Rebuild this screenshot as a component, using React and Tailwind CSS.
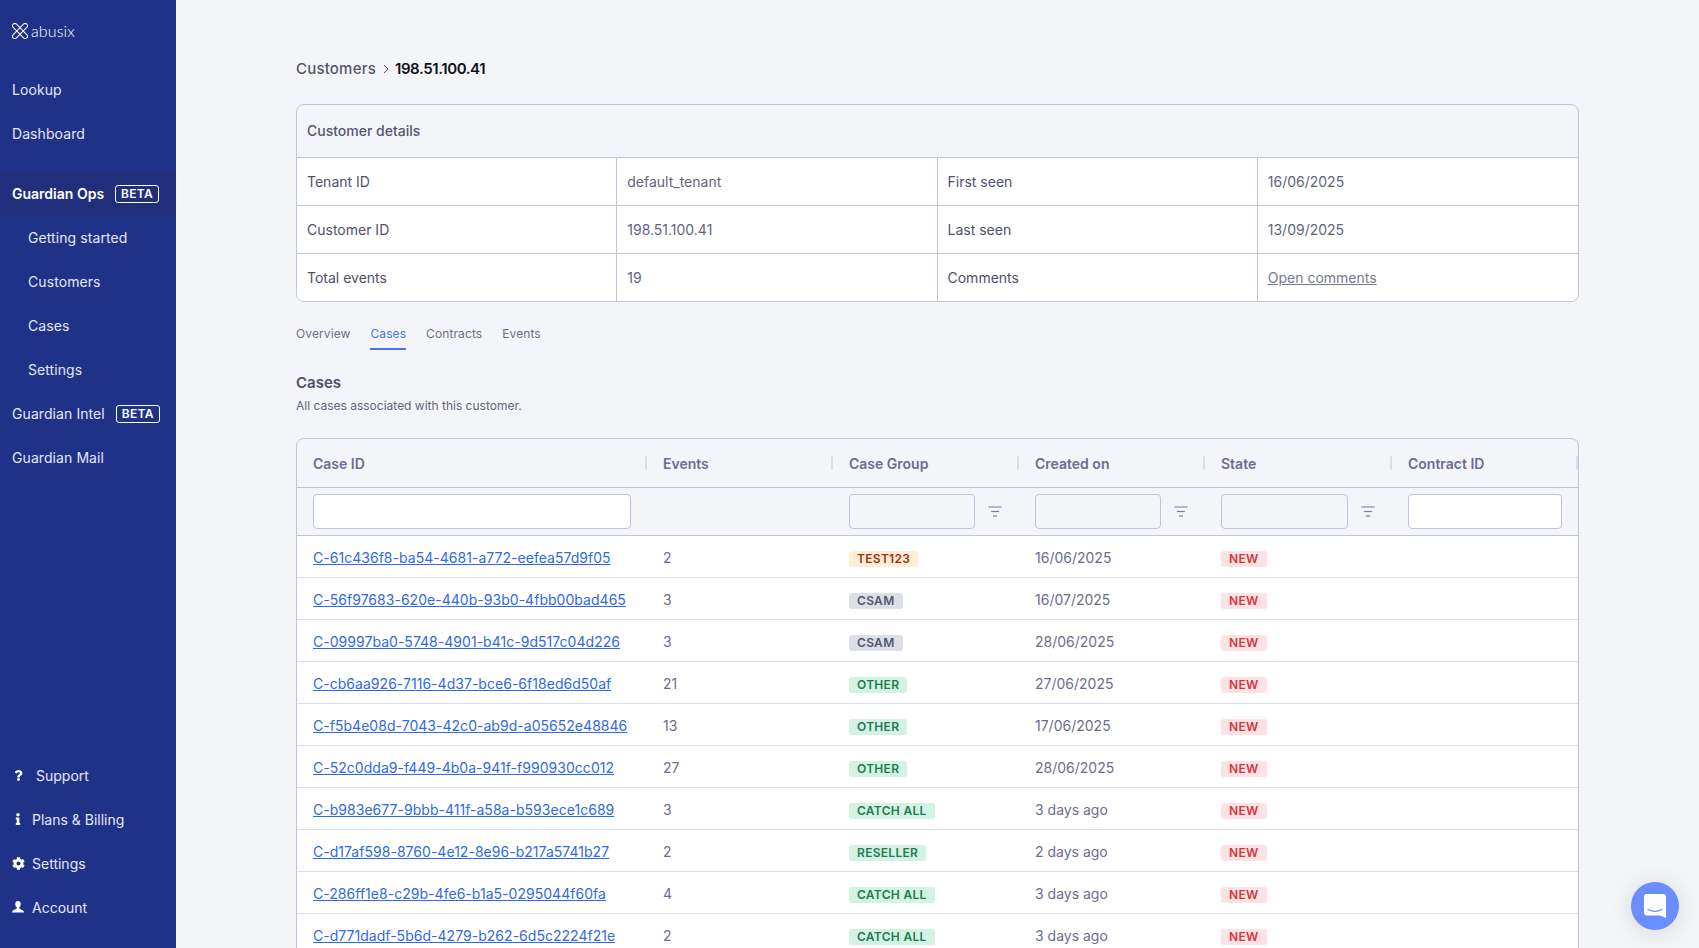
import { FaQuestion, FaInfo, FaCog } from 'react-icons/fa';

const cases = [
  ['C-61c436f8-ba54-4681-a772-eefea57d9f05', '2', 'TEST123', 'orange', '16/06/2025'],
  ['C-56f97683-620e-440b-93b0-4fbb00bad465', '3', 'CSAM', 'gray', '16/07/2025'],
  ['C-09997ba0-5748-4901-b41c-9d517c04d226', '3', 'CSAM', 'gray', '28/06/2025'],
  ['C-cb6aa926-7116-4d37-bce6-6f18ed6d50af', '21', 'OTHER', 'green', '27/06/2025'],
  ['C-f5b4e08d-7043-42c0-ab9d-a05652e48846', '13', 'OTHER', 'green', '17/06/2025'],
  ['C-52c0dda9-f449-4b0a-941f-f990930cc012', '27', 'OTHER', 'green', '28/06/2025'],
  ['C-b983e677-9bbb-411f-a58a-b593ece1c689', '3', 'CATCH ALL', 'green', '3 days ago'],
  ['C-d17af598-8760-4e12-8e96-b217a5741b27', '2', 'RESELLER', 'green', '2 days ago'],
  ['C-286ff1e8-c29b-4fe6-b1a5-0295044f60fa', '4', 'CATCH ALL', 'green', '3 days ago'],
  ['C-d771dadf-5b6d-4279-b262-6d5c2224f21e', '2', 'CATCH ALL', 'green', '3 days ago'],
];

const badgeColors = {
  orange: 'bg-[#ffedd5] text-[#9a3412]',
  gray: 'bg-[#dcdfe8] text-[#55576e]',
  green: 'bg-[#d3f3e2] text-[#1f7a55]',
  red: 'bg-[#fde2e3] text-[#d5353f]',
};

const gridCols = 'grid grid-cols-[350px_186px_186px_186px_187px_1fr]';

function Logo() {
  return (
    <div className="flex items-center gap-[3px] h-[68px] pl-3 pb-[6px] text-white">
      <svg width="16" height="16" viewBox="0 0 16 16" fill="none" stroke="currentColor" strokeWidth="1">
        <rect x="-1.6" y="5.7" width="19.2" height="4.6" rx="2.3" transform="rotate(45 8 8)" />
        <rect x="-1.6" y="5.7" width="19.2" height="4.6" rx="2.3" transform="rotate(-45 8 8)" />
      </svg>
      <span className="font-['Lato',sans-serif] font-light text-[16px] tracking-[0.1px] leading-none">abusix</span>
    </div>
  );
}

function Beta() {
  return (
    <span className="h-[18px] mt-[2px] px-[5px] flex items-center border border-white rounded-[3px] text-[12px] font-semibold tracking-[0.3px] text-white">
      BETA
    </span>
  );
}

function NavItem({ label, sub, bold, active, beta }) {
  return (
    <div
      className={`h-[44px] pb-[2px] flex items-center gap-[11px] text-[14px] ${sub ? 'pl-7' : 'pl-3'} ${
        active ? 'bg-[#212e7b]' : ''
      } ${bold ? 'font-semibold text-white' : 'text-[#e4e7f6] tracking-[0.08px]'}`}
    >
      {label}
      {beta && <Beta />}
    </div>
  );
}

function FooterItem({ icon, label, wide }) {
  return (
    <div className="h-[44px] pb-[2px] flex items-center text-[14px] text-[#e4e7f6]">
      <span className="w-[32px] flex justify-center pl-[4px] text-white">{icon}</span>
      <span className={wide ? 'pl-1' : ''}>{label}</span>
    </div>
  );
}

function AccountIcon() {
  return (
    <svg width="12" height="12" viewBox="0 0 12 12" fill="currentColor">
      <ellipse cx="6" cy="3.2" rx="2.7" ry="3.1" />
      <path d="M0 11.5c0-2 2-3 4.6-3.8L4.8 6h2.4l.2 1.7C10 8.5 12 9.5 12 11.5z" />
    </svg>
  );
}

function Sidebar() {
  return (
    <aside className="w-[176px] shrink-0 bg-[#203288] flex flex-col justify-between pb-[18px]">
      <div>
        <Logo />
        <NavItem label="Lookup" />
        <NavItem label="Dashboard" />
        <div className="h-4" />
        <NavItem label="Guardian Ops" bold active beta />
        <NavItem label="Getting started" sub />
        <NavItem label="Customers" sub />
        <NavItem label="Cases" sub />
        <NavItem label="Settings" sub />
        <NavItem label="Guardian Intel" beta />
        <NavItem label="Guardian Mail" />
      </div>
      <div>
        <FooterItem icon={<FaQuestion size={11} />} label="Support" wide />
        <FooterItem icon={<FaInfo size={12} />} label="Plans & Billing" />
        <FooterItem icon={<FaCog size={13} />} label="Settings" />
        <FooterItem icon={<AccountIcon />} label="Account" />
      </div>
    </aside>
  );
}

function DetailRow({ cells }) {
  return (
    <div className="grid grid-cols-4 border-t border-[#bfc3dd] bg-white text-[14px]">
      {cells.map((c, i) => (
        <div key={i} className={`flex items-center h-[47px] px-[10px] ${i < 3 ? 'border-r border-[#bfc3dd]' : ''}`}>
          <span className={i % 2 === 0 ? 'text-[#4f5168]' : 'text-[#62647c]'}>{c}</span>
        </div>
      ))}
    </div>
  );
}

function HeaderCell({ label }) {
  return (
    <div className="flex items-center justify-between pl-4 h-[48px] text-[14px] font-semibold text-[#6d6c8e]">
      {label}
      <span className="w-[2px] h-[14px] bg-[#dddfe9]" />
    </div>
  );
}

function FilterIcon() {
  return (
    <svg width="14" height="11" viewBox="0 0 14 11" stroke="#7c7b9b" strokeWidth="1.2">
      <line x1="0.5" y1="1" x2="13.5" y2="1" />
      <line x1="3" y1="5.5" x2="11" y2="5.5" />
      <line x1="5" y1="10" x2="9" y2="10" />
    </svg>
  );
}

function FilterInput({ width, white, icon }) {
  return (
    <div className="flex items-center pl-4 h-[47px]">
      <input
        className={`${width} h-[35px] border border-[#bfc3dd] rounded-[4px] ${white ? 'bg-white' : 'bg-transparent'}`}
      />
      {icon && (
        <span className="ml-[13px]">
          <FilterIcon />
        </span>
      )}
    </div>
  );
}

function Badge({ color, children }) {
  return (
    <span className={`inline-flex items-center h-4 mt-[3px] px-2 rounded-[3px] text-[12px] font-semibold tracking-[0.3px] ${badgeColors[color]}`}>
      {children}
    </span>
  );
}

function CasesTable() {
  return (
    <div className="mt-6 border border-[#bfc3dd] rounded-t-[8px] overflow-hidden">
      <div className={gridCols}>
        {['Case ID', 'Events', 'Case Group', 'Created on', 'State', 'Contract ID'].map(h => (
          <HeaderCell key={h} label={h} />
        ))}
      </div>
      <div className={`${gridCols} border-t border-[#bfc3dd]`}>
        <FilterInput width="w-[318px]" white />
        <div />
        <FilterInput width="w-[126px]" icon />
        <FilterInput width="w-[126px]" icon />
        <FilterInput width="w-[127px]" icon />
        <FilterInput width="w-[154px]" white />
      </div>
      <div className="bg-white border-t border-[#bfc3dd]">
        {cases.map((c, i) => (
          <div
            key={c[0]}
            className={`${gridCols} items-center pt-[2px] text-[14px] text-[#6d6c8e] ${
              i ? 'h-[42px] border-t border-[#dcdde8]' : 'h-[41px]'
            }`}
          >
            <a className="pl-4 text-[#2f6ae3] underline tracking-[0.03px] whitespace-nowrap">{c[0]}</a>
            <div className="pl-4">{c[1]}</div>
            <div className="pl-4 flex">
              <Badge color={c[3]}>{c[2]}</Badge>
            </div>
            <div className="pl-4">{c[4]}</div>
            <div className="pl-4 flex">
              <Badge color="red">NEW</Badge>
            </div>
            <div />
          </div>
        ))}
      </div>
    </div>
  );
}

function Tabs() {
  const tabs = ['Overview', 'Cases', 'Contracts', 'Events'];
  return (
    <div className="flex gap-5 mt-6 text-[12px] leading-4 tracking-[0.1px]">
      {tabs.map(t => (
        <div
          key={t}
          className={`pb-[6px] border-b-2 ${
            t === 'Cases' ? 'text-[#4a72ee] border-[#4a72ee]' : 'text-[#6d6f86] border-transparent'
          }`}
        >
          {t}
        </div>
      ))}
    </div>
  );
}

function ChatButton() {
  return (
    <div className="absolute right-5 bottom-[18px] w-12 h-12 rounded-full bg-[#6a8dff] flex items-center justify-center shadow-[0_2px_24px_rgba(0,0,0,0.12)]">
      <svg width="22" height="24" viewBox="0 0 22 24">
        <path d="M3 0h16a3 3 0 0 1 3 3v21l-6-2.6H3a3 3 0 0 1-3-3V3a3 3 0 0 1 3-3z" fill="#fff" />
        <path d="M4 15.5c4.5 2.4 9.5 2.4 14 0" fill="none" stroke="#6a8dff" strokeWidth="1.2" strokeLinecap="round" />
      </svg>
    </div>
  );
}

export default function App() {
  return (
    <div className="relative flex h-screen overflow-hidden bg-[#f4f5f8] font-['Inter',sans-serif]">
      <Sidebar />
      <main className="flex-1 min-w-0 pt-14 pl-[120px] pr-[120px]">
        <div className="flex items-center h-6 pt-[2px]">
          <span className="text-[15px] tracking-[0.2px] font-medium text-[#55566c]">Customers</span>
          <svg className="ml-1 mr-[3px]" width="12" height="12" viewBox="0 0 12 12" fill="none" stroke="#55566c" strokeWidth="1">
            <path d="M4 2l4 4-4 4" />
          </svg>
          <span className="text-[15px] tracking-[-0.4px] font-semibold text-[#111118]">198.51.100.41</span>
        </div>

        <div className="mt-6 border border-[#bfc3dd] rounded-[8px] overflow-hidden">
          <div className="h-[52px] pb-[2px] flex items-center px-[10px] text-[14px] font-medium text-[#55566c]">
            Customer details
          </div>
          <DetailRow cells={['Tenant ID', 'default_tenant', 'First seen', '16/06/2025']} />
          <DetailRow cells={['Customer ID', '198.51.100.41', 'Last seen', '13/09/2025']} />
          <DetailRow
            cells={[
              'Total events',
              '19',
              'Comments',
              <a className="underline text-[#76788f]">Open comments</a>,
            ]}
          />
        </div>

        <Tabs />

        <h2 className="mt-[21px] text-[15px] leading-6 font-semibold text-[#4f5168]">Cases</h2>
        <p className="mt-[3px] text-[12px] leading-4 text-[#62647c]">All cases associated with this customer.</p>

        <CasesTable />
      </main>
      <ChatButton />
    </div>
  );
}
